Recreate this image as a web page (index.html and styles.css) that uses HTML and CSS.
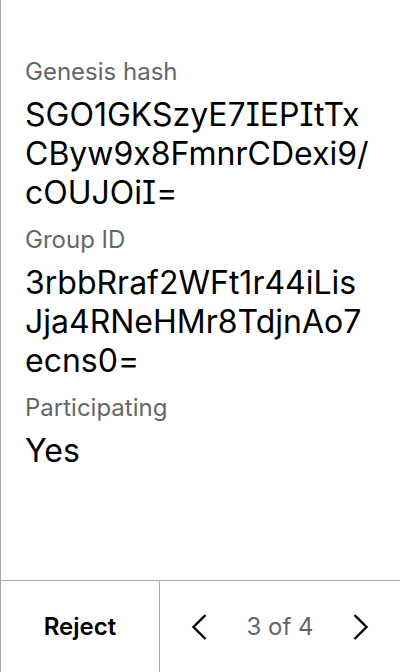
FILE: index.html
```html
<!DOCTYPE html>
<html lang="en">
<head>
<meta charset="utf-8">
<title>Transaction</title>
<link rel="stylesheet" href="styles.css">
</head>
<body>
<div class="screen">
  <main class="details">
    <div class="field">
      <div class="label">Genesis hash</div>
      <div class="value">SGO1GKSzyE7IEPItTxCByw9x8FmnrCDexi9/cOUJOiI=</div>
    </div>
    <div class="field">
      <div class="label">Group ID</div>
      <div class="value">3rbbRraf2WFt1r44iLisJja4RNeHMr8TdjnAo7ecns0=</div>
    </div>
    <div class="field">
      <div class="label">Participating</div>
      <div class="value">Yes</div>
    </div>
  </main>
  <footer class="actions">
    <button class="reject" type="button">Reject</button>
    <div class="pager">
      <button class="nav" type="button" aria-label="Previous">
        <svg width="16" height="26" viewBox="0 0 16 26"><path d="M14.5 1 L2.5 13 L14.5 25" fill="none" stroke="#000" stroke-width="2.4"/></svg>
      </button>
      <span class="count">3 of 4</span>
      <button class="nav" type="button" aria-label="Next">
        <svg width="16" height="26" viewBox="0 0 16 26"><path d="M1.5 1 L13.5 13 L1.5 25" fill="none" stroke="#000" stroke-width="2.4"/></svg>
      </button>
    </div>
  </footer>
</div>
</body>
</html>
```
FILE: styles.css
```css
* { box-sizing: border-box; }
html, body { margin: 0; padding: 0; background: #fff; }
body {
  font-family: Inter, "Noto Sans", sans-serif;
  color: #000;
  font-feature-settings: "calt" 0;
}
.screen {
  width: 400px;
  height: 672px;
  display: flex;
  flex-direction: column;
  border-left: 1px solid #a9a9a9;
}
.details {
  flex: 1;
  padding: 57px 26px 0 24px;
  display: flex;
  flex-direction: column;
  gap: 13px;
}
.label {
  font-size: 24px;
  line-height: 29px;
  color: #666;
}
.value {
  margin-top: 9px;
  font-size: 32px;
  line-height: 39px;
  word-break: break-all;
  font-feature-settings: "calt" 0, "cv08" 1;
}
.actions {
  height: 92px;
  border-top: 1px solid #a9a9a9;
  display: flex;
}
button {
  font-family: inherit;
  background: none;
  border: 0;
  padding: 0;
  margin: 0;
  cursor: pointer;
}
.reject {
  width: 159px;
  border-right: 1px solid #a9a9a9;
  font-size: 24px;
  font-weight: 600;
  color: #000;
}
.pager {
  flex: 1;
  display: flex;
  align-items: center;
  justify-content: space-between;
  padding: 0 31px 0 31px;
}
.nav {
  display: flex;
  align-items: center;
  justify-content: center;
  width: 16px;
  height: 26px;
}
.count {
  font-size: 24px;
  color: #666;
}
```
